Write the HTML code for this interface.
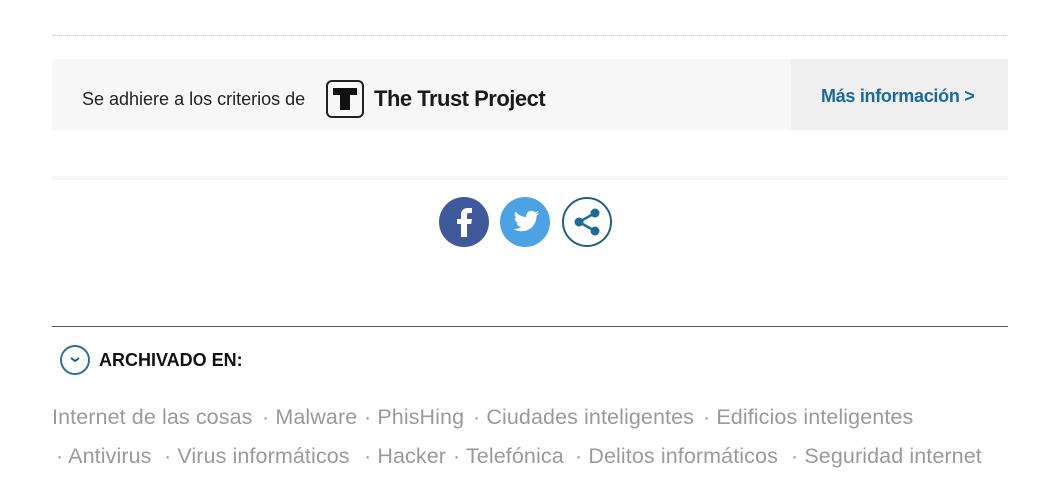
<!DOCTYPE html>
<html><head><meta charset="utf-8"><style>
body{margin:0;width:1043px;height:501px;background:#fff;font-family:"Liberation Sans",sans-serif;position:relative;overflow:hidden}
.a{position:absolute;white-space:nowrap}
.t{position:absolute;white-space:nowrap;font-size:21.5px;color:#9a9a9a;letter-spacing:0.1px}
</style></head><body>
<div class="a" style="left:52px;top:35px;width:956px;border-top:1px dotted #c8c8c8"></div>
<div class="a" style="left:52px;top:59px;width:739px;height:71px;background:#f7f7f7"></div>
<div class="a" style="left:791px;top:59px;width:217px;height:71px;background:#f0f0f0"></div>
<div class="a" style="left:82px;top:89px;font-size:18px;color:#222">Se adhiere a los criterios de</div>
<div class="a" style="left:326px;top:80px;width:38px;height:38px;border:2px solid #222;border-radius:6px;box-sizing:border-box"></div>
<div class="a" style="left:333px;top:88px;width:24px;height:7px;background:#111"></div>
<div class="a" style="left:340px;top:88px;width:10px;height:22px;background:#111"></div>
<div class="a" style="left:374px;top:86px;font-size:22px;font-weight:bold;color:#1a1a1a;letter-spacing:-0.5px">The Trust Project</div>
<div class="a" style="left:821px;top:86px;font-size:18px;font-weight:bold;color:#1a6a9a;letter-spacing:-0.3px">Más información &gt;</div>
<div class="a" style="left:52px;top:176px;width:956px;height:4px;background:#f6f6f6"></div>
<svg class="a" style="left:438px;top:196px" width="176" height="52" viewBox="0 0 176 52">
<circle cx="26" cy="26" r="25" fill="#3f5a9c"/>
<path d="M23 41V28h-4v-5h4v-4c0-4 2-7 7-7h4v5h-3c-1.5 0-2 .7-2 2v4h5l-.8 5H29v13z" fill="#fff"/>
<circle cx="87" cy="26" r="25" fill="#4ba3e6"/>
<path d="M101 17c-1 .5-2 .7-3 .8 1-.7 2-1.6 2.300-2.800-1 .6-2 1-3.300 1.300a5.200 5.200 0 0 0-8.800 4.700c-4.300-.2-8.100-2.300-10.700-5.400-1.400 2.400-.7 5.500 1.600 7-.9 0-1.700-.3-2.400-.6 0 2.500 1.800 4.700 4.200 5.100-.8.2-1.600.3-2.400.1.700 2.100 2.600 3.600 4.900 3.600-2.100 1.700-4.900 2.500-7.700 2.200 2.300 1.500 5.100 2.300 8 2.300 9.600 0 15-8.100 14.800-15.400 1-.7 1.900-1.700 2.500-2.800z" fill="#fff"/>
<circle cx="149" cy="26" r="24" fill="#fff" stroke="#1f5f86" stroke-width="2"/>
<g fill="#1f6a96"><circle cx="157" cy="17" r="4.500"/><circle cx="157" cy="35" r="4.500"/><circle cx="141" cy="26" r="4.500"/></g>
<path d="M157 17L141 26L157 35" stroke="#1f6a96" stroke-width="2.500" fill="none"/>
</svg>
<div class="a" style="left:52px;top:326px;width:956px;height:1px;background:#555"></div>
<div class="a" style="left:60px;top:345px;width:30px;height:30px;border:2px solid #2e6f98;border-radius:50%;box-sizing:border-box"></div>
<svg class="a" style="left:68px;top:355px" width="14" height="10"><path d="M3 3l4 3 4-3" stroke="#1f5f86" stroke-width="2" fill="none"/></svg>
<div class="a" style="left:99px;top:350px;font-size:18px;font-weight:bold;color:#111">ARCHIVADO EN:</div>
<div class="t" style="left:52px;top:405px">Internet de las cosas</div>
<div class="t" style="left:262px;top:405px">· Malware</div>
<div class="t" style="left:364px;top:405px">· PhisHing</div>
<div class="t" style="left:473px;top:405px">· Ciudades inteligentes</div>
<div class="t" style="left:703px;top:405px">· Edificios inteligentes</div>
<div class="t" style="left:56px;top:444px">· Antivirus</div>
<div class="t" style="left:164px;top:444px">· Virus informáticos</div>
<div class="t" style="left:364px;top:444px">· Hacker</div>
<div class="t" style="left:453px;top:444px">· Telefónica</div>
<div class="t" style="left:575px;top:444px">· Delitos informáticos</div>
<div class="t" style="left:791px;top:444px">· Seguridad internet</div>
</body></html>
